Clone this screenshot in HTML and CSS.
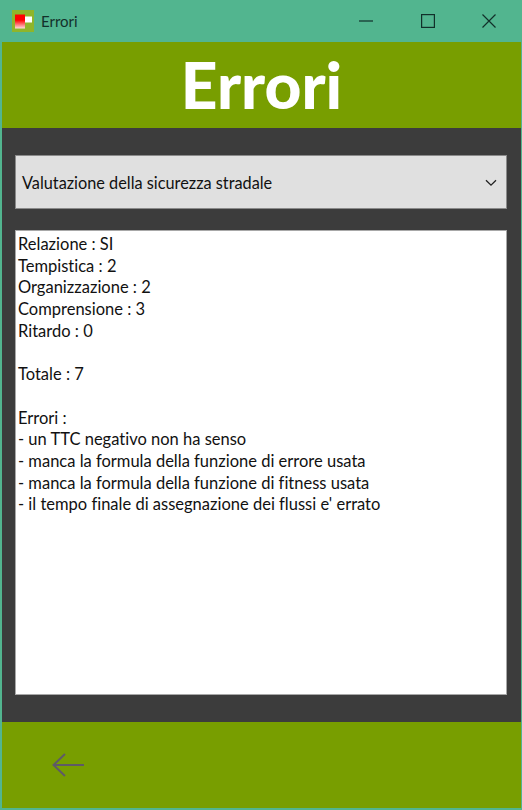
FILE: index.html
```html
<!DOCTYPE html>
<html lang="it">
<head>
    <meta charset="UTF-8">
    <meta name="viewport" content="width=device-width, initial-scale=1.0">
    <title>Errori</title>
    <link rel="stylesheet" href="styles.css">
</head>
<body>
    <div class="window">
        <div class="titlebar">
            <div class="app-icon">
                <svg width="22" height="22" viewBox="0 0 22 22">
                    <defs>
                        <linearGradient id="fade" x1="0" y1="0" x2="0" y2="1">
                            <stop offset="0" stop-color="#ff0000"/>
                            <stop offset="0.4" stop-color="#ff0000"/>
                            <stop offset="1" stop-color="#ffe0e0"/>
                        </linearGradient>
                    </defs>
                    <rect width="22" height="22" fill="#8fb52a"/>
                    <rect x="3" y="4.5" width="10" height="14" fill="url(#fade)"/>
                    <rect x="13" y="6.5" width="7" height="6" fill="#ffffff"/>
                </svg>
            </div>
            <span class="window-title">Errori</span>
            <div class="window-controls">
                <button class="control">
                    <svg width="14" height="14" viewBox="0 0 14 14"><path d="M0 7H14" stroke="#12302a" stroke-width="1.2" fill="none"/></svg>
                </button>
                <button class="control">
                    <svg width="14" height="14" viewBox="0 0 14 14"><rect x="0.6" y="0.6" width="12.8" height="12.8" stroke="#12302a" stroke-width="1.2" fill="none"/></svg>
                </button>
                <button class="control">
                    <svg width="14" height="14" viewBox="0 0 14 14"><path d="M0.5 0.5L13.5 13.5M13.5 0.5L0.5 13.5" stroke="#12302a" stroke-width="1.2" fill="none"/></svg>
                </button>
            </div>
        </div>

        <div class="header">
            <h1>Errori</h1>
        </div>

        <div class="content">
            <div class="combo">
                <span>Valutazione della sicurezza stradale</span>
                <svg width="12" height="8" viewBox="0 0 12 8"><path d="M1 1.2L6 6.2L11 1.2" stroke="#222" stroke-width="1.3" fill="none"/></svg>
            </div>
            <div class="report">Relazione : SI
Tempistica : 2
Organizzazione : 2
Comprensione : 3
Ritardo : 0

Totale : 7

Errori :
- un TTC negativo non ha senso
- manca la formula della funzione di errore usata
- manca la formula della funzione di fitness usata
- il tempo finale di assegnazione dei flussi e' errato</div>
        </div>

        <div class="footer">
            <button class="back-btn">
                <svg width="32" height="24" viewBox="0 0 32 24"><path d="M32 12H1M13 1L1.5 12L13 23" stroke="#5f5a66" stroke-width="2" fill="none"/></svg>
            </button>
        </div>
    </div>
</body>
</html>
```

FILE: styles.css
```css
html, body {
    margin: 0;
    height: 100%;
}
body {
    font-family: 'Lato', 'Open Sans', sans-serif;
    font-variant-ligatures: none;
    background: #52b58f;
    color: #111;
}
.window {
    display: flex;
    flex-direction: column;
    height: 810px;
    box-sizing: border-box;
    padding: 0 1px 2px 2px;
}
.titlebar {
    height: 42px;
    box-sizing: border-box;
    padding: 0 0 1px 10px;
    display: flex;
    align-items: center;
    flex-shrink: 0;
}
.app-icon {
    width: 22px;
    height: 22px;
    margin-right: 7px;
}
.window-title {
    font-size: 15px;
    color: #12302a;
}
.window-controls {
    margin-left: auto;
    padding-right: 1px;
    display: flex;
}
.control {
    width: 61.5px;
    height: 41px;
    padding: 0;
    border: none;
    background: none;
    display: flex;
    align-items: center;
    justify-content: center;
}
.header {
    height: 86px;
    background: #789e00;
    display: flex;
    align-items: center;
    justify-content: center;
    flex-shrink: 0;
}
.header h1 {
    margin: 0;
    color: white;
    font-size: 64px;
    font-weight: 900;
    line-height: 1;
}
.content {
    flex: 1;
    background: #3c3c3c;
    padding: 27px 14px 27px 13px;
    display: flex;
    flex-direction: column;
    gap: 21px;
}
.combo {
    height: 54px;
    box-sizing: border-box;
    background: #e0e0e0;
    border: 1px solid #8a8a8a;
    display: flex;
    align-items: center;
    justify-content: space-between;
    padding: 1px 9px 0 6px;
    font-size: 16.3px;
    flex-shrink: 0;
}
.report {
    flex: 1;
    background: white;
    border: 1px solid #a8a8a8;
    padding: 3px 2px 2px;
    font-size: 16.5px;
    line-height: 21.7px;
    white-space: pre-line;
}
.footer {
    height: 86px;
    background: #789e00;
    display: flex;
    align-items: center;
    padding-left: 50px;
    flex-shrink: 0;
}
.back-btn {
    padding: 0;
    border: none;
    background: none;
    display: flex;
}
```
